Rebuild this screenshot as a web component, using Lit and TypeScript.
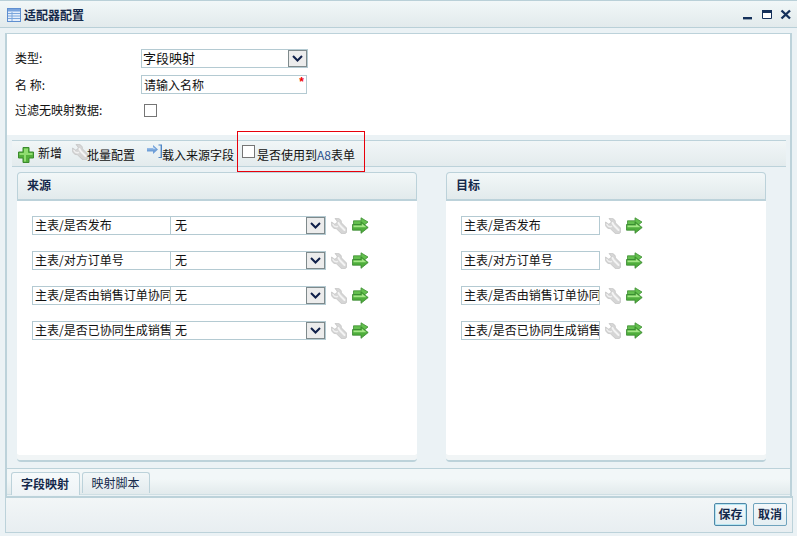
import { LitElement, html, css, svg } from "lit";
import { customElement } from "lit/decorators.js";

const rowsData = ["主表/是否发布", "主表/对方订单号", "主表/是否由销售订单协同", "主表/是否已协同生成销售"];

const wrench = html`<svg class="ico" width="16" height="16" viewBox="0 0 16 16">
  <path d="M.6 4 3.400 6 5.600 5.400 6.200 3.200 4 .6C7.500-.6 11 1.800 10.400 4.800L15.200 9.600C16.500 11.400 16.300 13.400 15.200 14.800 13.800 16.200 11.600 16.400 10 15.200L5.200 10.600C2 11 -.4 7.800.6 4Z" fill="#d6d6d6" stroke="#c0c0c0" stroke-width=".7"/>
  <path d="M7.500 5C8 6.500 9 7.500 10 8.500L13.500 12" fill="none" stroke="#f4f4f4" stroke-width="2" stroke-linecap="round"/>
  <path d="M2 6.500C3 8.500 5 9 6.500 8.500" fill="none" stroke="#f0f0f0" stroke-width="1.400" stroke-linecap="round"/>
</svg>`;

const arrows = html`<svg class="ico" width="17" height="17" viewBox="0 0 17 17">
  <path d="M1.500 3.800H9V.8L16 5 13 7.500H1.500Z" fill="#63bf4e" stroke="#3f8f35" stroke-width=".8"/>
  <path d="M.5 7.500H9V4.800L16.200 10.500 9 16.300V13.200H.5Z" fill="#4fae3c" stroke="#37862f" stroke-width=".8"/>
  <path d="M1.500 8.500H10V6.800L14.500 10.300H1.500Z" fill="#a3e686"/>
</svg>`;

const plus = html`<svg class="ico" width="16" height="16" viewBox="0 0 16 16">
  <path d="M5 .5H11V5H15.500V11H11V15.500H5V11H.5V5H5Z" fill="#54b03c" stroke="#3a8a2c" stroke-linejoin="round"/>
  <path d="M6 1.500H10V6H14.500V8H8V14.500H6V8H1.500V6H6Z" fill="#8fdc70"/>
</svg>`;

const importIco = html`<svg class="ico" width="16" height="15" viewBox="0 0 16 15">
  <path d="M0 4H6V1L11 5.500 6 10V7.500H0Z" fill="#6f9fd8"/>
  <path d="M0 4.600H6V2.600L9 5.200H0Z" fill="#b9d4f1"/>
  <path d="M11.500.5H15V14H11.500V13H13.600V1.500H11.500Z" fill="#4f86c6"/>
</svg>`;

const chevron = html`<svg width="11" height="7" viewBox="0 0 11 7"><path d="M1 1 5.500 5.500 10 1" fill="none" stroke="#10204a" stroke-width="2"/></svg>`;

const winIcons = svg`
  <path d="M743 17h9v2.400h-9z" fill="#14305a"/>
  <path d="M762.500 10.500h9v8h-9z" fill="#fff" stroke="#14305a"/>
  <path d="M762 10h10v3h-10z" fill="#14305a"/>
  <path d="M781.500 10.500 790 18.500M790 10.500 781.500 18.500" stroke="#14305a" stroke-width="2.400"/>
`;

@customElement("app-root")
export class AppRoot extends LitElement {
  static styles = css`
    :host { display: block; width: 797px; height: 536px; overflow: hidden; }
    * { box-sizing: border-box; }
    .win {
      position: relative; width: 797px; height: 536px; display: flex; flex-direction: column;
      background: #ebf2f5; font: 12px/16px "Noto Sans CJK SC", "Liberation Sans", sans-serif; color: #111;
    }
    .title {
      height: 28px; flex: none; display: flex; align-items: center; gap: 3px; padding: 1px 0 0 7px;
      border-top: 1px solid #b9d0d8; border-bottom: 1px solid #b9d0d8;
      background: linear-gradient(#f1f7f8, #e2eaec);
      font-weight: 700; color: #15294b;
    }
    .winctl { position: absolute; left: 0; top: 0; pointer-events: none; }
    .main {
      flex: none; height: 463px; margin: 5px 5px 0 5px;
      border: solid #bcd2da; border-width: 1px 2px 0; display: flex; flex-direction: column;
    }
    .form { height: 101px; flex: none; background: #fff; padding: 15px 0 0 8px; display: flex; flex-direction: column; }
    .frow { display: flex; align-items: center; }
    .frow.r1 { height: 19px; }
    .frow.r2 { height: 19px; margin-top: 7px; }
    .frow.r3 { height: 13px; margin-top: 10px; }
    .lbl { width: 127px; flex: none; }
    .r1 .lbl { margin-top: -2px; }
    .r3 .lbl { width: 129px; margin-top: -2px; }
    .field {
      position: relative; height: 19px; border: 1px solid #b4cad2; background: #fff;
      display: flex; align-items: center; padding: 0 0 2px 2px; white-space: nowrap; overflow: hidden;
    }
    .f-type { width: 167px; font-size: 13px; padding-left: 1px; margin-left: -1px; }
    .f-name { width: 166px; padding: 0 0 0 2px; margin-left: -1px; }
    .req { position: absolute; right: 2px; top: -1px; color: #e00; font: 700 12px/14px "Liberation Sans", sans-serif; }
    .selbtn {
      margin: 0 0 -2px auto; width: 19px; height: 17px; flex: none; border: 1px solid #7f8a8c;
      background: #ececec; display: flex; align-items: center; justify-content: center;
    }
    .check {
      appearance: none; margin: 0; width: 13px; height: 13px; flex: none;
      border: 1px solid #757575; background: #fff; border-radius: 0;
    }
    .lower { flex: 1; display: flex; flex-direction: column; padding-top: 5px; min-height: 0; }
    .toolbar {
      height: 27px; flex: none; margin: 0 4px 0 5px; display: flex; align-items: flex-start;
      border-top: 1px solid #bcd2da; border-bottom: 1px solid #bcd2da;
      background: linear-gradient(#f1f6f7, #e3ebed); padding: 4px 0 0 6px;
    }
    .tb { display: flex; align-items: flex-start; flex: none; height: 16px; }
    .tb .ico { flex: none; }
    .tb span { line-height: 16px; }
    .tb-new { width: 54px; gap: 4px; }
    .tb-new .ico { margin-top: 2px; }
    .tb-batch { width: 75px; }
    .tb-batch .ico { margin: -1px -1px 0 0; }
    .tb-batch span { margin-top: 2px; }
    .tb-load { width: 95px; }
    .tb-load .ico { margin: -1px -1px 0 0; }
    .tb-load span { margin-top: 2px; }
    .tb-a8 { gap: 2px; }
    .tb-a8 span { margin-top: 2px; }
    .tb-a8 b { font-weight: 400; color: #2b4f8c; }
    .cols { height: 290px; flex: none; margin-top: 5px; padding-left: 10px; display: flex; gap: 29px; }
    .col { display: flex; flex-direction: column; }
    .col.src { width: 400px; }
    .col.tgt { width: 320px; }
    .colhead {
      height: 29px; flex: none; padding: 0 0 2px 9px; display: flex; align-items: center;
      font-weight: 700; color: #15294b; border: 1px solid #bcd2da; border-bottom-width: 2px;
      border-radius: 4px 4px 0 0; background: linear-gradient(#f2f7f8, #e2eaec);
    }
    .colbody {
      flex: 1; background: #fff; padding: 15px 0 0 15px; display: flex; flex-direction: column; gap: 16px;
      border-bottom: 2px solid #bcd2da; border-radius: 0 0 4px 4px;
      box-shadow: inset 0 -5px 0 #f1f5f6;
    }
    .row { display: flex; align-items: center; height: 19px; }
    .r-name { width: 139px; flex: none; }
    .r-sel { width: 155px; flex: none; border-left: none; padding-left: 4px; }
    .row .ico { flex: none; }
    .row .w { margin-left: 5px; display: flex; }
    .row .a { margin-left: 5px; display: flex; }
    .tabs {
      height: 27px; flex: none; margin-top: 6px; display: flex; align-items: flex-end; gap: 2px; padding-left: 4px;
      border-top: 1px solid #bcd2da; background: linear-gradient(#f2f7f8 40%, #e2eaec);
      border-bottom: 1px solid #cfdfe4;
    }
    .tab {
      width: 68px; height: 21px; display: flex; align-items: center; justify-content: center; padding-right: 1px;
      border: 1px solid #bcd2da; border-bottom: none; border-radius: 3px 3px 0 0; color: #15294b;
      background: linear-gradient(#f2f7f8, #e3ebee); margin-bottom: 1px;
    }
    .tab.on { width: 69px; height: 23px; font-weight: 700; background: linear-gradient(#f6fafb, #eef3f6); margin-bottom: -1px; }
    .foot {
      flex: none; height: 37px; margin: 0 4px 0 5px; border: 1px solid #bcd2da; border-top-width: 2px;
      background: linear-gradient(#f2f6f7, #e8eef1); display: flex; align-items: center; justify-content: flex-end;
      gap: 6px; padding: 0 5px 2px 0;
    }
    .btn {
      width: 34px; height: 23px; border: 1px solid #6fa3bd; border-radius: 2px; background: linear-gradient(#f3f8fa, #e4eef2);
      font: 700 12px/16px "Noto Sans CJK SC", sans-serif; color: #15294b; padding: 0; display: flex; align-items: center; justify-content: center;
    }
    .btn.def { width: 33px; border-color: #4f88a8; box-shadow: inset 0 0 0 1px #b5e6f2; }
    .mark { position: absolute; left: 237px; top: 131px; width: 128px; height: 41px; border: 1px solid #e8000b; pointer-events: none; }
  `;

  private renderSelect(value: string, cls: string) {
    return html`<div class="field ${cls}"><span>${value}</span><div class="selbtn">${chevron}</div></div>`;
  }

  private renderRow(name: string, withSelect: boolean) {
    return html`<div class="row">
      <div class="field r-name">${name}</div>
      ${withSelect ? this.renderSelect("无", "r-sel") : ""}
      <span class="w">${wrench}</span>
      <span class="a">${arrows}</span>
    </div>`;
  }

  render() {
    return html`<div class="win">
      <div class="title">
        <svg width="14" height="14" viewBox="0 0 14 14">
          <rect x=".5" y=".5" width="13" height="13" fill="#e4eefb" stroke="#5f8fd0"/>
          <path d="M1 1h12v2.500H1z" fill="#7aa5de"/>
          <path d="M1 5.500h12M1 8h12M1 10.500h12M5 4v9" stroke="#7ba6dc"/>
        </svg>
        <span>适配器配置</span>
      </div>
      <svg class="winctl" width="797" height="30">${winIcons}</svg>
      <div class="main">
        <div class="form">
          <div class="frow r1"><div class="lbl">类型:</div>${this.renderSelect("字段映射", "f-type")}</div>
          <div class="frow r2"><div class="lbl">名 称:</div><div class="field f-name">请输入名称<span class="req">*</span></div></div>
          <div class="frow r3"><div class="lbl">过滤无映射数据:</div><input class="check" type="checkbox" /></div>
        </div>
        <div class="lower">
          <div class="toolbar">
            <div class="tb tb-new">${plus}<span>新增</span></div>
            <div class="tb tb-batch">${wrench}<span>批量配置</span></div>
            <div class="tb tb-load">${importIco}<span>载入来源字段</span></div>
            <label class="tb tb-a8"><input class="check" type="checkbox" /><span>是否使用到<b>A8</b>表单</span></label>
          </div>
          <div class="cols">
            <section class="col src">
              <div class="colhead">来源</div>
              <div class="colbody">${rowsData.map((r) => this.renderRow(r, true))}</div>
            </section>
            <section class="col tgt">
              <div class="colhead">目标</div>
              <div class="colbody">${rowsData.map((r) => this.renderRow(r, false))}</div>
            </section>
          </div>
          <div class="tabs">
            <div class="tab on">字段映射</div>
            <div class="tab">映射脚本</div>
          </div>
        </div>
      </div>
      <div class="foot">
        <button class="btn def">保存</button>
        <button class="btn">取消</button>
      </div>
      <div class="mark"></div>
    </div>`;
  }
}
